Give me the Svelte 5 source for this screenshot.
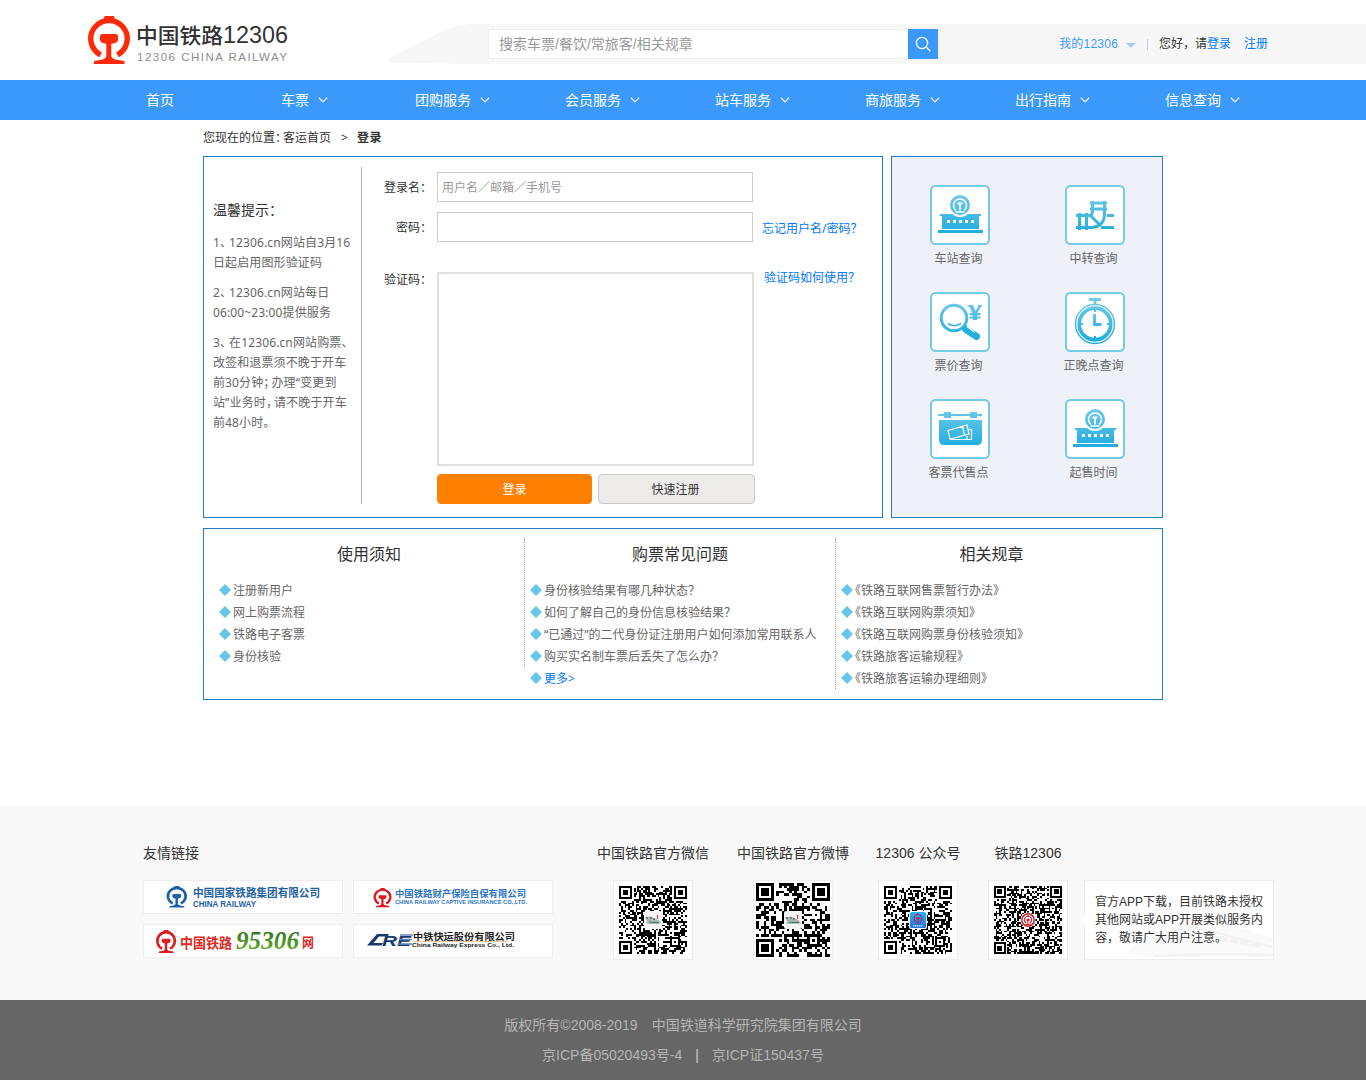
<script>
  const nav = ['首页', '车票', '团购服务', '会员服务', '站车服务', '商旅服务', '出行指南', '信息查询'];

  const tips = [
    ['1、12306.cn网站自3月16', '日起启用图形验证码'],
    ['2、12306.cn网站每日', '06:00~23:00提供服务'],
    ['3、在12306.cn网站购票、', '改签和退票须不晚于开车', '前30分钟；办理“变更到', '站”业务时，请不晚于开车', '前48小时。'],
  ];

  const services = [
    { label: '车站查询', icon: 'station' },
    { label: '中转查询', icon: 'transfer' },
    { label: '票价查询', icon: 'price' },
    { label: '正晚点查询', icon: 'clock' },
    { label: '客票代售点', icon: 'agent' },
    { label: '起售时间', icon: 'station' },
  ];

  const columns = [
    { title: '使用须知', items: ['注册新用户', '网上购票流程', '铁路电子客票', '身份核验'] },
    {
      title: '购票常见问题',
      items: [
        '身份核验结果有哪几种状态？',
        '如何了解自己的身份信息核验结果？',
        '“已通过”的二代身份证注册用户如何添加常用联系人',
        '购买实名制车票后丢失了怎么办？',
      ],
      more: true,
    },
    {
      title: '相关规章',
      items: [
        '《铁路互联网售票暂行办法》',
        '《铁路互联网购票须知》',
        '《铁路互联网购票身份核验须知》',
        '《铁路旅客运输规程》',
        '《铁路旅客运输办理细则》',
      ],
    },
  ];

  // Half-width punctuation, with the room that follows each mark.
  const narrow = { '、': 'p3', '，': 'p2', '：': 'p2', '；': 'p2' };
  const split = (text) => text.split(/([、，：；])/).filter(Boolean);

  // Builds the dark modules of a code with its finder and alignment marks.
  function qrPath(n, seed) {
    let s = seed;
    const rand = () => ((s = (s * 1103515245 + 12345) % 2147483648) / 2147483648);
    const finder = (x, y) => {
      const d = Math.max(Math.abs(x - 3), Math.abs(y - 3));
      return d > 3 ? false : d !== 2;
    };
    let d = '';
    for (let y = 0; y < n; y++) {
      for (let x = 0; x < n; x++) {
        let on = rand() > 0.48;
        const dx = x < 8 ? x : x > n - 9 ? n - 1 - x : -1;
        const dy = y < 8 ? y : y > n - 9 ? n - 1 - y : -1;
        if (dx >= 0 && dy >= 0 && !(x > n - 9 && y > n - 9)) on = finder(dx, dy);
        const a = Math.max(Math.abs(x - n + 7), Math.abs(y - n + 7));
        if (a < 3) on = a !== 1;
        if (on) d += `M${x} ${y}h1v1h-1z`;
      }
    }
    return d;
  }

  const codes = [
    { title: '中国铁路官方微信', n: 37, size: 'c68', mark: 'train', d: qrPath(37, 71) },
    { title: '中国铁路官方微博', n: 29, size: 'c74', mark: 'train', d: qrPath(29, 913) },
    { title: '12306 公众号', n: 37, size: 'c68', mark: 'app', d: qrPath(37, 4057) },
    { title: '铁路12306', n: 41, size: 'c68', mark: 'red', d: qrPath(41, 20011) },
  ];
</script>

{#snippet txt(text)}{#each split(text) as part}{#if narrow[part]}<span class="punct {narrow[part]}">{part}</span>{:else}{part}{/if}{/each}{/snippet}

{#snippet emblem()}
  <path d="M12.6 38.2A18.2 18.2 0 1 1 29.4 38.2" transform="translate(0 .6)" fill="none" stroke="currentColor" stroke-width="5.4" />
  <path fill="currentColor" d="M16.500 0h9.500l1 5h-11.500zM14.500 18h13q2.500 0 2.500 2.500v3q0 3-3 3.500l-3.700 1v12q.2 3 6.700 4l6.500 1v3H6v-3l6-1q6-1 6.300-4V28l-3.300-1q-3-.6-3-3.500v-3q0-2.500 2.500-2.500z" />
{/snippet}

<svg class="defs" width="0" height="0" aria-hidden="true">
  <defs>
    <linearGradient id="sky" x1="0" y1="8" x2="0" y2="50" gradientUnits="userSpaceOnUse">
      <stop offset="0" stop-color="#73cbe9" />
      <stop offset="1" stop-color="#1babde" />
    </linearGradient>
    <linearGradient id="green" x1="0" y1="0" x2="0" y2="1">
      <stop offset="0" stop-color="#256b24" />
      <stop offset="1" stop-color="#6eb52c" />
    </linearGradient>
    <linearGradient id="tile" x1="0" y1="0" x2="0" y2="1">
      <stop offset="0" stop-color="#22b8f5" />
      <stop offset="1" stop-color="#2670e8" />
    </linearGradient>
  </defs>
</svg>

<header>
  <svg class="logo" width="202" height="50" viewBox="0 0 202 50">
    <g class="red" transform="translate(1 1)">{@render emblem()}</g>
    <text class="logo-cn" x="49" y="28" textLength="87" lengthAdjust="spacingAndGlyphs">中国铁路</text>
    <text class="logo-num" x="136" y="28" textLength="65" lengthAdjust="spacingAndGlyphs">12306</text>
    <text class="logo-en" x="50" y="45.500" textLength="150">12306 CHINA RAILWAY</text>
  </svg>
  <div class="band">
    <svg class="swoosh" width="100" height="40" viewBox="0 0 100 40">
      <path d="M3 39Q-2 37 3 33L38 16Q60 1 82 0H100V40z" fill="#f7f7f7" />
    </svg>
    <div class="band-fill">
      <div class="search">
        <span>搜索车票/餐饮/常旅客/相关规章</span>
        <button aria-label="搜索">
          <svg width="30" height="30" viewBox="0 0 30 30" fill="none" stroke="#fff" stroke-width="1.300">
            <circle cx="14" cy="14" r="5.600" /><path d="M18 18l4.300 4.300" />
          </svg>
        </button>
      </div>
      <div class="user">
        <a class="mine" href="#mine">我的12306</a><i class="caret"></i><i class="bar"></i>
        <span class="hello">您好，请</span><a href="#login">登录</a><a class="reg" href="#reg">注册</a>
      </div>
    </div>
  </div>
</header>

<nav>
  {#each nav as item, i}
    <a href="#nav{i}">{item}
      {#if i > 0}
        <svg width="10" height="6" viewBox="0 0 10 6" fill="none" stroke="#fff" stroke-width="1.200"><path d="M.8.6L5 4.800 9.200.6" /></svg>
      {/if}
    </a>
  {/each}
</nav>

<main>
  <div class="crumbs">
    <span>{@render txt('您现在的位置：')}客运首页</span><span class="gt">&gt;</span><strong>登录</strong>
  </div>

  <div class="top">
    <section class="login">
      <aside>
        <h3>温馨提示：</h3>
        {#each tips as tip}
          <p>{#each tip as line}<span class="line">{@render txt(line)}</span>{/each}</p>
        {/each}
      </aside>
      <form>
        <label for="name">{@render txt('登录名：')}</label>
        <input id="name" placeholder="用户名／邮箱／手机号" />
        <span></span>
        <label for="pass">{@render txt('密码：')}</label>
        <input id="pass" type="password" />
        <a href="#forgot">忘记用户名/密码？</a>
        <span class="label-code">{@render txt('验证码：')}</span>
        <div class="captcha"></div>
        <a class="how" href="#how">验证码如何使用？</a>
        <span></span>
        <div class="buttons">
          <button type="button" class="primary">登录</button>
          <button type="button" class="second">快速注册</button>
        </div>
      </form>
    </section>

    <section class="services">
      {#each services as s}
        <a href="#svc">
          <svg width="60" height="60" viewBox="0 0 60 60">
            <rect x="1" y="1" width="58" height="58" rx="4.500" fill="#fff" stroke="#73cbe9" stroke-width="2" />
            {#if s.icon === 'station'}
              <path fill="url(#sky)" d="M10 29h41v2h-2v13H12V31h-2zM8 45h45v3H8z" />
              <circle cx="30" cy="20" r="12" fill="#fff" />
              <circle cx="30" cy="20" r="10" fill="url(#sky)" />
              <g fill="none" stroke="#fff">
                <path d="M26 25.500A6.500 6.500 0 1 1 34 25.500" stroke-width="1.500" />
                <path d="M27.500 18.500h5M30 18.500v7" stroke-width="1.800" />
                <path d="M25.500 27h9" stroke-width="1.500" />
              </g>
              <path fill="#fff" d="M17 35h3v3h-3zM23 35h3v3h-3zM29 35h3v3h-3zM35 35h3v3h-3zM41 35h3v3h-3z" />
            {:else if s.icon === 'transfer'}
              <g fill="none" stroke="url(#sky)">
                <path d="M11 30.500H25Q27.500 30 27.500 26V16M11 42.500H27Q39.500 41 39.500 29V16M25 30L36 41M42 30.500h7M36 42.500h13" stroke-width="3" />
                <path d="M14.500 28v17M21.500 28v17M25 18l17 .01M25 24l17 .01" stroke-width="3" />
              </g>
            {:else if s.icon === 'price'}
              <circle cx="24" cy="26" r="12.800" fill="none" stroke="url(#sky)" stroke-width="3" />
              <path d="M18 31.500q6 4.500 13 0" fill="none" stroke="url(#sky)" stroke-width="1.600" />
              <path d="M35.500 37l11 7.500" stroke="#27aedb" stroke-width="7" stroke-linecap="round" />
              <path d="M37 34.500l7.500 5.500" stroke="#fff" stroke-width="1.500" />
              <path fill="url(#sky)" d="M37.500 13h6v1.500l2.200 4.500 2.300-4.500V13h4v1.500h-1l-3.500 6.500h3v2.200h-3.500v1.300h3.500v2H47V28h-4v-1.500h-3.500v-2H43v-1.300h-3.500V21h3L39 14.500h-1.500z" />
            {:else if s.icon === 'clock'}
              <g fill="none" stroke="url(#sky)">
                <circle cx="30" cy="32" r="19.500" stroke-width="1.400" />
                <circle cx="30" cy="32" r="15.800" stroke-width="3.700" />
                <path d="M30 16v4M30 44v4M14 32h4M42 32h4" stroke-width="2" />
                <path d="M24 7.500l12 .01" stroke-width="3" />
                <path d="M30 8v5M29.500 22v10.500H36.500" stroke-width="2.800" />
              </g>
            {:else}
              <path fill="url(#sky)" d="M8 15h6v-2h7v2h19v-2h7v2h5v2h-5v2h-7v-2H21v2h-7v-2H8zM9 21h43v20q0 5-5 5H14q-5 0-5-5z" />
              <g fill="none" stroke="#fff" stroke-width="1.200">
                <path d="M18 31.500l19-5.500 2 9-19 5zM32.500 27.500l2 8.500M39 30.500h2.500v10H37v-3.500M20.500 40.500H37" />
              </g>
            {/if}
          </svg>
          <span>{s.label}</span>
        </a>
      {/each}
    </section>
  </div>

  <section class="info">
    {#each columns as col}
      <div class="col">
        <h2>{col.title}</h2>
        <ul>
          {#each col.items as item}
            <li><span class:book={item[0] === '《'}>{item}</span></li>
          {/each}
          {#if col.more}<li><a href="#more">更多&gt;</a></li>{/if}
        </ul>
      </div>
    {/each}
  </section>
</main>

<footer>
  <div class="links">
    <div class="friends">
      <h4>友情链接</h4>
      <div class="boxes">
        <svg viewBox="1 1 198 32">
          <g color="#1e62a5" transform="translate(23.500 6) scale(.49 .45)">{@render emblem()}</g>
          <g class="bold" fill="#1e62a5">
            <text x="50" y="17" font-size="11" textLength="127" lengthAdjust="spacingAndGlyphs">中国国家铁路集团有限公司</text>
            <text class="arial" x="50" y="27" font-size="8.500" textLength="63" lengthAdjust="spacingAndGlyphs">CHINA RAILWAY</text>
          </g>
        </svg>
        <svg viewBox="1 1 198 32">
          <g color="#dd1620" transform="translate(20.500 8) scale(.43 .4)">{@render emblem()}</g>
          <g class="bold" fill="#2d75c2">
            <text x="42" y="17" font-size="9.500" textLength="131" lengthAdjust="spacingAndGlyphs">中国铁路财产保险自保有限公司</text>
            <text class="arial" x="42" y="24" font-size="5.500" textLength="132" lengthAdjust="spacingAndGlyphs">CHINA RAILWAY CAPTIVE INSURANCE CO.,LTD.</text>
          </g>
        </svg>
        <svg viewBox="1 1 198 32">
          <g color="#dd1c20" transform="translate(13 6) scale(.48 .48)">{@render emblem()}</g>
          <g class="bold" fill="#dd2a22">
            <text x="37" y="23.500" font-size="14" textLength="52" lengthAdjust="spacingAndGlyphs">中国铁路</text>
            <text x="159" y="23" font-size="13" textLength="12" lengthAdjust="spacingAndGlyphs">网</text>
          </g>
          <text class="serif" x="93" y="25" fill="url(#green)" textLength="63" lengthAdjust="spacingAndGlyphs">95306</text>
        </svg>
        <svg viewBox="1 1 198 32">
          <path d="M14 21.500L24 10H36L34.500 12.500H26L20.500 19H30L28.500 21.500z" fill="#173a70" />
          <text class="arial cre" x="29" y="21.500" textLength="29" lengthAdjust="spacingAndGlyphs" fill="#173a70">RE</text>
          <path d="M47 11h13M46 15.500h13M45 20h14" stroke="#6688b5" stroke-width="1.500" />
          <path d="M60 7l1 3M60 17.500h95" stroke="#e0a45b" stroke-width=".6" />
          <g class="bold" fill="#222">
            <text x="60" y="16.200" font-size="9.500" textLength="102" lengthAdjust="spacingAndGlyphs">中铁快运股份有限公司</text>
            <text class="arial" x="59" y="23" font-size="5" textLength="102" lengthAdjust="spacingAndGlyphs">China Railway Express Co., Ltd.</text>
          </g>
        </svg>
      </div>
    </div>
    {#each codes as code}
      <div class="code">
        <h4>{code.title}</h4>
        <div class="card">
          <svg class={code.size} viewBox="0 0 {code.n} {code.n}">
            <path d={code.d} fill="#000" shape-rendering="crispEdges" />
          </svg>
          <svg class="mark" width="18" height="18" viewBox="0 0 18 18">
            {#if code.mark === 'train'}
              <rect width="18" height="18" rx="2" fill="#f3f4f3" />
              <path d="M1 6l6-.5 8 4 2 3H4z" fill="#aeb9b7" />
              <path d="M2 7h2M6 7h2M9 8h2M5 11.500h10" stroke="#59706b" stroke-width="1.300" />
              <path d="M13.500 4v4" stroke="#d54848" stroke-width="1.300" />
              <path d="M2 12h6" stroke="#86ba8c" />
            {:else if code.mark === 'app'}
              <rect width="18" height="18" rx="2" fill="#fff" />
              <rect x="1" y="1" width="16" height="16" rx="1.500" fill="url(#tile)" />
              <g color="#b72846" transform="translate(4.500 2.500) scale(.21)">{@render emblem()}</g>
              <path d="M4 14.800h10" stroke="#cde8ff" stroke-width="1.200" stroke-dasharray="1.500 .5" />
            {:else}
              <circle cx="9" cy="9" r="7.500" fill="#fff" />
              <circle cx="9" cy="9" r="6.200" fill="#fff" stroke="#c9252d" stroke-width="1.500" />
              <g color="#c9252d" transform="translate(4.700 4.300) scale(.205)">{@render emblem()}</g>
            {/if}
          </svg>
        </div>
      </div>
    {/each}
    <div class="notice">
      <i class="arrow"></i>
      <svg class="train" width="145" height="50" viewBox="0 0 145 50">
        <path d="M0 43Q12 25 55 13Q62 8 70 13Q105 14 145 30V48H45Q10 50 0 43z" fill="#fafafa" />
        <path d="M30 28q22-10 40-9l75 19M26 47Q80 44 145 46" fill="none" stroke="#f2f2f2" stroke-width="2" />
        <path d="M80 27l55 10" stroke="#f3f3f3" stroke-width="5" stroke-dasharray="9 2" />
      </svg>
      <p>官方APP下载，目前铁路未授权<br />其他网站或APP开展类似服务内<br />容，敬请广大用户注意。</p>
    </div>
  </div>
  <div class="legal">
    <p>版权所有©2008-2019<span class="gap"></span>中国铁道科学研究院集团有限公司</p>
    <p>京ICP备05020493号-4<span class="sep">|</span>京ICP证150437号</p>
  </div>
</footer>

<style>
  :global(body) { background: #fff; }
  :global(#app) {
    font: 12px/20px "Noto Sans", "Noto Sans CJK SC", sans-serif;
    color: #333;
  }
  :global(#app *) { box-sizing: border-box; }
  .defs { display: block; }
  a { color: #0077ff; text-decoration: none; }
  h2, h3, h4, p, ul { margin: 0; padding: 0; font-weight: 400; }
  button, input { font: inherit; }

  header, nav, footer { font-family: "Liberation Sans", "Noto Sans CJK SC", sans-serif; }

  header { display: flex; height: 80px; padding: 15px 0 0 87px; }
  .logo { flex: none; margin-right: 99px; }
  .red { color: #fc2a08; }
  .logo-cn { font-size: 21px; fill: #333; font-weight: 500; }
  .logo-num { font-size: 24px; fill: #333; }
  .logo-en { font-size: 11.5px; fill: #8c8c8c; }
  .band { display: flex; flex: 1; height: 40px; margin-top: 9px; }
  .swoosh { flex: none; }
  .band-fill { display: flex; flex: 1; align-items: center; background: #f7f7f7; }
  .search { display: flex; width: 450px; height: 30px; flex: none; background: #fff; }
  .search span { flex: 1; border: 1px solid #eee; border-right: 0; padding-left: 10px; font-size: 14px; line-height: 28px; color: #999; }
  .search button { width: 30px; height: 30px; padding: 0; border: 0; background: #3b99fc; }
  .search button svg { display: block; }
  .user { display: flex; align-items: center; height: 40px; margin-left: 121px; white-space: nowrap; }
  .user .mine { width: 60px; color: #3b99fc; letter-spacing: .25px; }
  .caret { margin: 3px 11px 0 7px; border: 5px solid transparent; border-top-color: #a3cff8; border-bottom: 0; }
  .bar { width: 1px; height: 11px; margin-right: 11px; background: #aed4f9; }
  .hello { width: 48px; }
  .reg { margin-left: 13px; }

  nav {
    display: grid;
    grid-template-columns: 135px 134px repeat(6, 150px);
    height: 40px;
    padding-left: 146px;
    background: #3b99fc;
    font-size: 14px;
    line-height: 40px;
  }
  nav a { display: flex; gap: 9px; align-items: center; color: #fff; }

  main { width: 960px; height: 686px; margin: 0 auto; }
  .crumbs { display: flex; height: 36px; line-height: 36px; }
  .crumbs strong { letter-spacing: .5px; }
  .gt { margin: 0 9px 0 10px; }
  .punct { font-feature-settings: "halt"; white-space: nowrap; }
  .p2 { margin-right: 2px; }
  .p3 { margin-right: 3px; }

  .top { display: flex; justify-content: space-between; }
  .login { display: flex; width: 680px; height: 362px; border: 1px solid #2180c3; padding-top: 10px; }
  aside { width: 158px; height: 337px; padding: 33px 0 0 9px; border-right: 1px solid #b5b5b5; color: #666; }
  h3 { margin-bottom: 13px; font-size: 14px; line-height: 20px; color: #333; }
  aside p { margin-bottom: 10px; letter-spacing: .12px; }
  .line { display: block; white-space: nowrap; }

  form {
    display: grid;
    grid-template-columns: 67px 317px 110px;
    grid-template-rows: 30px 30px 194px 30px;
    column-gap: 8px;
    row-gap: 10px;
    height: 337px;
    padding-top: 5px;
    line-height: 32px;
    white-space: nowrap;
  }
  label, .label-code { padding-right: 1px; text-align: right; }
  form a { line-height: 33px; }
  input { width: 316px; height: 30px; border: 1px solid #cfcdc7; border-radius: 0; padding: 2px 4px 0; outline: 0; background: #fff; }
  input::placeholder { color: #999; opacity: 1; }
  .label-code { height: 30px; margin-top: 12px; }
  form a.how { margin: 9px 0 0 2px; }
  .captcha { width: 317px; height: 194px; margin-top: 20px; border: 2px solid #dfdfdb; }
  .buttons { display: flex; gap: 6px; margin-top: 18px; }
  .buttons button { height: 30px; padding: 2px 2px 0 0; border-radius: 4px; line-height: 26px; }
  .buttons .primary { width: 155px; flex: none; padding-right: 0; border: 1px solid #ff8000; background: #ff8000; color: #fff; }
  .second { width: 157px; flex: none; border: 1px solid #c9c9c9; background: #eeebeb; color: #333; }

  .services {
    display: grid;
    grid-template-columns: 135px 135px;
    grid-auto-rows: 107px;
    width: 272px;
    height: 362px;
    padding-top: 28px;
    border: 1px solid #2180c3;
    background: #eef1f8;
  }
  .services a { display: flex; flex-direction: column; align-items: center; color: #666; }
  .services svg { margin-left: 1px; }
  .services span { margin: 4px 2px 0 0; }

  .info { display: flex; align-items: flex-start; height: 172px; margin-top: 10px; padding: 10px; border: 1px solid #2180c3; }
  .col { width: 311px; flex: none; border-right: 1px dotted #999; }
  .col:last-child { border-right: 0; }
  h2 { margin-bottom: 10px; font-size: 16px; line-height: 30px; text-align: center; }
  ul { padding-left: 5px; list-style: none; }
  li { display: flex; align-items: center; height: 22px; padding-top: 2px; color: #666; white-space: nowrap; }
  li::before { content: ""; width: 12px; height: 12px; margin: 0 2px 2px 0; flex: none; background: #66c7e8; clip-path: polygon(50% 0, 100% 50%, 50% 100%, 0 50%); }
  .book { margin-left: -6px; }

  .links { display: flex; height: 194px; padding: 37px 0 0 143px; background: #f8f8f8; }
  h4 { height: 37px; font-size: 14px; line-height: 20px; white-space: nowrap; }
  .friends { width: 440px; }
  .boxes { display: grid; grid-template-columns: 200px 200px; gap: 10px; }
  .boxes svg { display: block; width: 200px; height: 34px; border: 1px solid #eee; background: #fff; }
  .bold { font-weight: 700; }
  .arial { font-family: "Liberation Sans", sans-serif; }
  .serif { font: italic 700 25px "Liberation Serif", serif; }
  .cre { font-size: 15px; font-style: italic; font-weight: 700; }
  .code { display: flex; flex-direction: column; align-items: center; width: 140px; }
  .code:nth-child(n + 4) { width: 110px; }
  .card { display: grid; place-items: center; width: 80px; height: 80px; border: 1px solid #eee; background: #fff; }
  .card > svg { grid-area: 1 / 1; }
  .c68 { width: 68px; height: 68px; }
  .c74 { width: 74px; height: 74px; }
  .notice { position: relative; width: 190px; height: 80px; margin: 37px 0 0 1px; padding: 12px 0 0 10px; border: 1px solid #eee; background: #fff; line-height: 18px; white-space: nowrap; }
  .notice p { position: relative; }
  .train { position: absolute; right: 0; bottom: 0; }
  .arrow { position: absolute; left: -5px; top: 34px; border: 5px solid transparent; border-right-color: #fff; border-left: 0; }

  .legal { height: 80px; padding-top: 10px; background: #666; color: #b5b5b5; font-size: 14px; line-height: 30px; text-align: center; }
  .gap { display: inline-block; width: 14px; }
  .sep { margin: 0 13px; color: #ccc; }
</style>
